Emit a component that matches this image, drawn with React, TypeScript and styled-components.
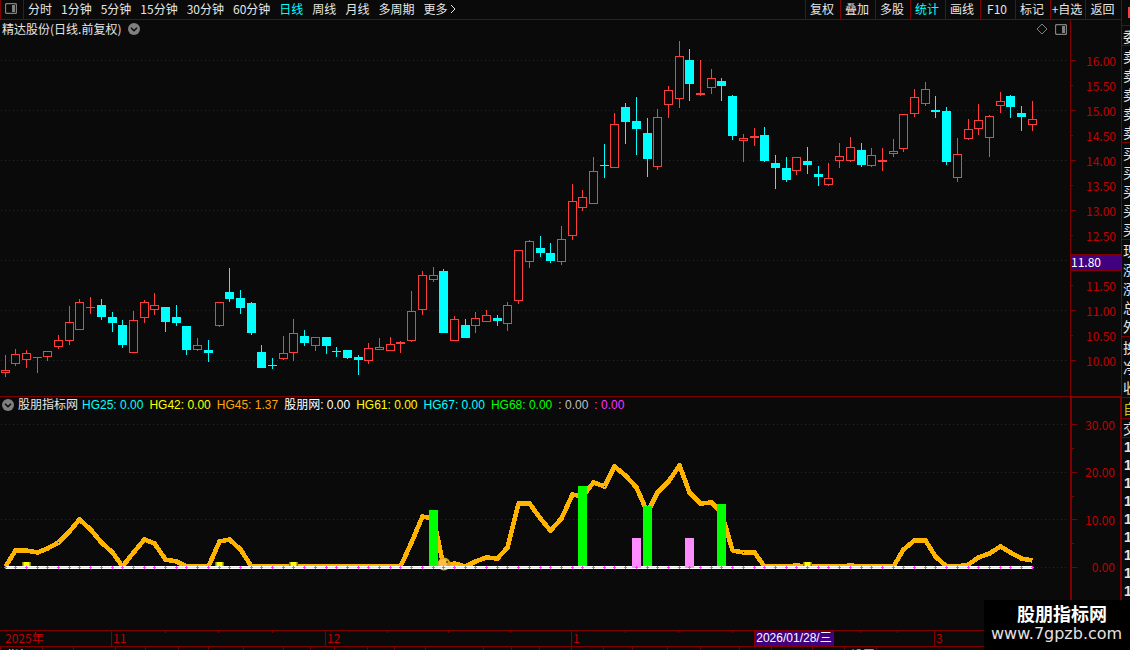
import React from "react";
import styled, { createGlobalStyle } from "styled-components";

const BG = "#0a0a0a";
const LINE = "#800000";
const LABEL = "#c00000";
const UP = "#ff3c3c";
const DOWN = "#00ffff";
const ICON = "#808080";

const GlobalStyle = createGlobalStyle`
  * { box-sizing: border-box; }
  html, body { margin: 0; background: ${BG}; }
  body {
    font-family: "Noto Sans CJK SC", "Liberation Sans", sans-serif;
    font-size: 12px;
    line-height: 16px;
    color: #e6e6e6;
    overflow-x: hidden;
  }
  button {
    font: inherit;
    color: inherit;
    background: none;
    border: 0;
    padding: 0;
    margin: 0;
    cursor: pointer;
    white-space: nowrap;
  }
  svg { display: block; flex: none; }
`;

const Page = styled.div`
  position: relative;
  min-height: 100vh;
  overflow: hidden;
`;

const Workspace = styled.div`
  display: grid;
  grid-template-columns: minmax(0, 1fr) 9px;
`;

const Toolbar = styled.nav`
  display: flex;
  height: 20px;
  border-bottom: 1px solid ${LINE};
`;

const LayoutButton = styled.button`
  width: 24px;
  padding: 0 0 2px 4px;
  border: solid ${LINE};
  border-width: 0 1px;
`;

const Periods = styled.div`
  display: flex;
  flex: 1;
  gap: 9px;
  padding-left: 4px;
`;

const PeriodButton = styled.button<{ $active?: boolean }>`
  display: flex;
  align-items: center;
  gap: 2px;
  padding-bottom: 2px;
  color: ${(p) => (p.$active ? DOWN : "inherit")};
`;

const Tools = styled.div`
  display: grid;
  grid-template-columns: repeat(8, 35px) 36px;
`;

const ToolButton = styled.button<{ $active?: boolean }>`
  padding: 0 2px 2px 0;
  border-left: 1px solid ${LINE};
  color: ${(p) => (p.$active ? DOWN : "inherit")};
`;

const Panel = styled.section`
  display: grid;
  grid-template-columns: minmax(0, 1fr) 51px;
`;

const SubPanel = styled(Panel)`
  border-top: 1px solid ${LINE};
`;

const Plot = styled.div`
  min-width: 0;
`;

const PlotHeader = styled.header`
  display: flex;
  align-items: center;
  height: 20px;
  padding: 0 3px 2px 2px;
`;

const Title = styled.h1`
  margin: 0 7px 0 0;
  font-size: 12px;
  font-weight: 400;
`;

const HeaderTools = styled.div`
  display: flex;
  align-items: center;
  gap: 7px;
  margin-left: auto;
`;

const Readout = styled.header`
  display: flex;
  align-items: center;
  height: 20px;
  gap: 6px;
  padding: 0 0 4px 2px;
  font-family: "Liberation Sans", "Noto Sans CJK SC", sans-serif;
  white-space: nowrap;
`;

const ReadoutTitle = styled.h2`
  margin: 0 -2px 0 -2px;
  font-size: 12px;
  font-weight: 400;
`;

const Value = styled.span<{ $color: string }>`
  color: ${(p) => p.$color};
`;

const Chart = styled.svg<{ $height: number }>`
  width: 100%;
  height: ${(p) => p.$height}px;
  shape-rendering: crispEdges;
`;

const Axis = styled.div`
  position: relative;
  border-left: 1px solid ${LINE};
  color: ${LABEL};
`;

const PriceAxis = styled(Axis)`
  padding-top: 28px;
`;

const ValueAxis = styled(Axis)`
  padding-top: 15px;
  border: solid ${LINE};
  border-width: 1px 1px 0 2px;
`;

const AxisScale = styled.div<{ $height: number }>`
  display: flex;
  flex-direction: column;
  height: ${(p) => p.$height}px;
`;

const AxisRow = styled.div<{ $minor?: boolean }>`
  display: flex;
  flex: 1;
  align-items: center;
  justify-content: space-between;
  padding-right: 5px;

  &::before {
    content: "";
    width: ${(p) => (p.$minor ? 2 : 5)}px;
    height: 1px;
    background: ${LINE};
  }
`;

const PriceTag = styled.output`
  position: absolute;
  top: 234px;
  left: 0;
  right: 0;
  height: 17px;
  border: solid ${LINE};
  border-width: 1px 0;
  background: #400080;
  color: #fff;
  line-height: 13px;
`;

const Side = styled.aside`
  border-left: 1px solid ${LINE};
  overflow: hidden;
`;

const SideBlock = styled.div<{ $height: number; $color?: string }>`
  display: flex;
  flex-direction: column;
  height: ${(p) => p.$height}px;
  padding-left: 1px;
  border-bottom: 1px solid ${LINE};
  color: ${(p) => p.$color || "inherit"};
`;

const SideRow = styled.div`
  display: flex;
  flex: 1;
  align-items: center;
  font-size: 14px;
  white-space: nowrap;
`;

const TickRow = styled.div`
  height: 18px;
  padding-left: 2px;
  font-family: "Liberation Sans", sans-serif;
  font-size: 14px;
  font-weight: 700;
  line-height: 18px;
`;

const Badge = styled.div`
  width: 2px;
  height: 11px;
  margin: 7px 0 0 auto;
  background: ${UP};
`;

const TimeAxis = styled.div`
  position: relative;
  display: grid;
  grid-template-columns: 111fr 214fr 246fr 363fr 196fr;
  height: 16px;
  border-top: 1px solid ${LINE};
  color: ${LABEL};
`;

const Month = styled.span<{ $first?: boolean }>`
  padding-left: ${(p) => (p.$first ? 5 : 1)}px;
  border-left: ${(p) => (p.$first ? 0 : 1)}px solid ${LINE};
  line-height: 14px;
`;

const TimeTicks = styled.svg`
  position: absolute;
  inset: 0;
  width: 100%;
  height: 2px;
  shape-rendering: crispEdges;
`;

const DateTag = styled.output`
  position: absolute;
  top: 0;
  left: 66.75%;
  height: 15px;
  padding: 0 1px;
  border: solid ${LINE};
  border-width: 0 1px;
  background: #400080;
  color: #fff;
  font-family: "Liberation Sans", "Noto Sans CJK SC", sans-serif;
  line-height: 15px;
  white-space: nowrap;
`;

const TabStrip = styled.div`
  display: flex;
  height: 4px;
  border-top: 1px solid ${LINE};
  overflow: hidden;
`;

const Tab = styled.span<{ $width: number; $active?: boolean }>`
  flex: ${(p) => p.$width} 0 0;
  min-width: 0;
  border-left: 1px solid ${LINE};
  text-indent: 6px;
  white-space: nowrap;
  color: ${(p) => (p.$active ? DOWN : "inherit")};
`;

const Watermark = styled.footer`
  position: absolute;
  right: 0;
  bottom: 0;
  width: 146px;
  height: 50px;
  padding: 1px 0 0 7px;
  background: #000;
  color: #fff;
  white-space: nowrap;
`;

const WatermarkName = styled.div`
  padding-left: 26px;
  font-size: 18px;
  font-weight: 700;
  line-height: 25px;
`;

const WatermarkLink = styled.a`
  display: block;
  color: #e8e0e0;
  font-family: "DejaVu Sans", sans-serif;
  font-size: 16px;
  line-height: 16px;
  text-decoration: none;
`;

/* high, body top, body bottom, low, rising */
type Candle = [number, number, number, number, 0 | 1];

const candles: Candle[] = [
  [355, 370, 373, 377, 1], [349, 354, 364, 366, 1], [350, 353, 360, 368, 1], [357, 357, 358, 373, 1],
  [351, 351, 357, 361, 1], [335, 340, 347, 349, 1], [306, 322, 341, 345, 1], [299, 302, 330, 330, 1],
  [297, 307, 308, 314, 1], [299, 305, 317, 320, 0], [312, 317, 323, 332, 0], [320, 325, 345, 348, 0],
  [311, 320, 353, 353, 1], [300, 302, 318, 323, 1], [293, 305, 310, 315, 1], [307, 307, 322, 332, 0],
  [305, 317, 323, 326, 0], [326, 326, 350, 355, 0], [338, 345, 350, 351, 1], [340, 350, 353, 362, 0],
  [302, 302, 326, 327, 1], [268, 292, 299, 302, 0], [290, 298, 308, 314, 0], [302, 303, 333, 335, 0],
  [345, 352, 368, 368, 0], [358, 365, 366, 369, 0], [336, 353, 359, 360, 1], [319, 333, 353, 361, 1],
  [330, 336, 343, 346, 0], [337, 337, 346, 351, 1], [337, 337, 346, 354, 0], [347, 351, 352, 357, 0],
  [350, 350, 358, 359, 0], [355, 357, 360, 375, 0], [343, 348, 361, 364, 1], [338, 347, 350, 350, 1],
  [337, 344, 351, 351, 1], [341, 342, 344, 353, 1], [291, 311, 341, 342, 1], [271, 275, 310, 315, 1],
  [267, 275, 280, 282, 1], [269, 271, 333, 333, 0], [316, 319, 341, 341, 1], [319, 325, 338, 338, 0],
  [312, 318, 326, 333, 1], [310, 315, 322, 322, 1], [315, 318, 321, 326, 0], [302, 305, 324, 331, 1],
  [250, 250, 301, 304, 1], [240, 241, 262, 268, 1], [236, 248, 253, 257, 0], [243, 253, 261, 263, 0],
  [226, 239, 262, 265, 1], [184, 201, 236, 240, 1], [190, 197, 208, 211, 1], [157, 171, 204, 204, 1],
  [144, 165, 166, 178, 0], [113, 124, 168, 168, 1], [103, 107, 122, 144, 0], [97, 121, 129, 155, 0],
  [118, 133, 159, 177, 0], [109, 117, 167, 170, 1], [86, 90, 105, 118, 1], [41, 56, 99, 108, 1],
  [49, 60, 84, 101, 0], [60, 93, 95, 96, 1], [69, 78, 88, 94, 1], [78, 81, 86, 101, 0],
  [95, 96, 136, 140, 0], [134, 138, 141, 162, 1], [128, 136, 138, 146, 1], [127, 135, 161, 162, 0],
  [155, 163, 168, 189, 0], [157, 168, 180, 182, 0], [157, 157, 171, 175, 1], [147, 161, 165, 174, 0],
  [166, 174, 177, 186, 0], [163, 178, 185, 186, 1], [143, 156, 161, 168, 1], [137, 147, 161, 162, 1],
  [143, 150, 165, 167, 0], [148, 155, 166, 167, 1], [148, 160, 162, 171, 1], [139, 151, 154, 157, 1],
  [114, 114, 149, 152, 1], [89, 97, 114, 117, 1], [82, 89, 104, 106, 1], [96, 110, 112, 118, 0],
  [107, 111, 162, 165, 0], [138, 154, 178, 182, 1], [119, 129, 139, 140, 1], [104, 120, 129, 135, 1],
  [115, 116, 138, 157, 1], [92, 101, 106, 113, 1], [95, 96, 107, 118, 0], [106, 113, 117, 131, 0],
  [101, 119, 125, 131, 1],
];

const curve = [
  566, 550, 550, 552, 548, 542, 531, 519, 529, 542, 552, 566, 552, 539, 543, 559, 561, 566, 566, 566,
  541, 539, 549, 566, 566, 566, 566, 566, 566, 566, 566, 566, 566, 566, 566, 566, 566, 566, 542, 516,
  518, 565, 563, 566, 561, 557, 558, 547, 503, 503, 518, 530, 518, 494, 496, 482, 486, 466, 475, 487,
  512, 492, 481, 465, 492, 503, 502, 512, 550, 552, 552, 566, 566, 566, 565, 566, 566, 566, 566, 565,
  566, 566, 566, 566, 549, 540, 540, 556, 566, 566, 564, 557, 553, 546, 552, 558, 560,
];

const centre = (i: number) => Math.floor(5 + (i * 107) / 10);

const greenBars = [
  { x: 429, top: 510 },
  { x: 578, top: 486 },
  { x: 643, top: 506 },
  { x: 717, top: 504 },
];
const pinkBars = [632, 685];
const yellowMarks = [2, 20, 27, 75];

const periods = ["分时", "1分钟", "5分钟", "15分钟", "30分钟", "60分钟", "日线", "周线", "月线", "多周期"];
const tools = ["复权", "叠加", "多股", "统计", "画线", "F10", "标记", "+自选", "返回"];
const prices = ["16.00", "15.50", "15.00", "14.50", "14.00", "13.50", "13.00", "12.50", "", "11.50", "11.00", "10.50", "10.00"];
const values = ["30.00", "", "20.00", "", "10.00", "", "0.00"];
const readouts: [string, string][] = [
  ["HG25: 0.00", "#00ffff"],
  ["HG42: 0.00", "#ffff00"],
  ["HG45: 1.37", "#ffa500"],
  ["股朋网: 0.00", "#ffffff"],
  ["HG61: 0.00", "#ffff00"],
  ["HG67: 0.00", "#00ffff"],
  ["HG68: 0.00", "#00ff00"],
  [": 0.00", "#c0c0c0"],
  [": 0.00", "#ff32ff"],
];
const timeTicks = [165, 218, 272, 387, 448, 510, 625, 678, 732, 860, 897];
const tabEdges = [
  0, 42, 73, 115, 144, 177, 207, 242, 282, 308, 332, 365, 391, 422, 480, 508, 536, 568, 599, 628, 663, 696, 735,
  766, 807, 839, 871, 1130,
];

const PanelIcon = () => (
  <svg width="12" height="11" viewBox="0 0 12 11">
    <rect x="0.5" y="0.5" width="11" height="10" rx="1.5" fill="none" stroke={ICON} strokeWidth="1.3" />
    <rect x="7" y="2" width="3" height="7" fill={ICON} />
  </svg>
);

const CollapseIcon = () => (
  <svg width="12" height="12" viewBox="0 0 12 12">
    <circle cx="6" cy="6" r="6" fill={ICON} />
    <path d="M3 4.8 L6 7.8 L9 4.8" fill="none" stroke={BG} strokeWidth="1.5" />
  </svg>
);

const GridLines = ({ rows }: { rows: number[] }) => (
  <>
    {rows.map((y) => (
      <line key={y} x1="1" x2="1067" y1={y + 0.5} y2={y + 0.5} stroke={LINE} strokeDasharray="1 3" />
    ))}
  </>
);

const CandleShape = ({ x, candle }: { x: number; candle: Candle }) => {
  const [high, top, bottom, low, rising] = candle;
  const color = rising ? UP : DOWN;
  return (
    <g>
      <rect x={x} y={high} width="1" height={low - high} fill={color} />
      {rising && bottom - top > 1 ? (
        <rect x={x - 3.5} y={top + 0.5} width="8" height={bottom - top - 1} fill={BG} stroke={color} />
      ) : (
        <rect x={x - 4} y={top} width="9" height={bottom - top} fill={color} />
      )}
    </g>
  );
};

const PriceChart = () => (
  <Chart $height={356} viewBox="0 40 1070 356" preserveAspectRatio="none">
    <GridLines rows={[60, 110, 160, 210, 260, 310, 360]} />
    {candles.map((c, i) => (
      <CandleShape key={i} x={centre(i)} candle={c} />
    ))}
  </Chart>
);

const IndicatorChart = () => (
  <Chart $height={213} viewBox="0 417 1070 213" preserveAspectRatio="none">
    <GridLines rows={[424, 472, 519, 567]} />
    <polyline
      points={curve.map((y, i) => `${centre(i) + 0.5},${y + 0.5}`).join(" ")}
      fill="none"
      stroke="#ffb400"
      strokeWidth="4.6"
      strokeLinejoin="round"
    />
    {yellowMarks.map((i) => (
      <g key={i}>
        <rect x={centre(i) - 4} y="562" width="9" height="6" fill="#808000" />
        <rect x={centre(i) - 3} y="562" width="7" height="6" fill="#c0c000" />
        <rect x={centre(i) - 2} y="562" width="5" height="6" fill="#ffff00" />
      </g>
    ))}
    {greenBars.map((b) => (
      <rect key={b.x} x={b.x} y={b.top} width="9" height={567 - b.top} fill="#00ff00" />
    ))}
    <g shapeRendering="auto">
      <circle cx="444" cy="564" r="6.5" fill="#d9a520" />
      <circle cx="443" cy="563" r="4" fill="#ffc040" />
      <circle cx="447" cy="562" r="1" fill="#5a4000" />
    </g>
    <rect x="5" y="566" width="1028" height="3" fill="#ffffff" />
    <rect x="5" y="567" width="1028" height="1" fill="#ffff00" />
    {pinkBars.map((x) => (
      <rect key={x} x={x} y="538" width="9" height="30" fill="#ff8cff" />
    ))}
    {candles.map((_, i) => (
      <g key={i} fill="#ff32ff">
        <rect x={centre(i)} y="566" width="1" height="3" />
        <rect x={centre(i) - 1} y="567" width="3" height="1" />
      </g>
    ))}
  </Chart>
);

const SideList = ({ items, height, color }: { items: string[]; height: number; color?: string }) => (
  <SideBlock $height={height} $color={color}>
    {items.map((t, i) => (
      <SideRow key={i}>{t}</SideRow>
    ))}
  </SideBlock>
);

export default function App() {
  return (
    <Page>
      <GlobalStyle />
      <Workspace>
        <main>
          <Toolbar>
            <LayoutButton aria-label="布局">
              <PanelIcon />
            </LayoutButton>
            <Periods>
              {periods.map((p) => (
                <PeriodButton key={p} $active={p === "日线"}>
                  {p}
                </PeriodButton>
              ))}
              <PeriodButton>
                更多
                <svg width="8" height="10" viewBox="0 0 8 10">
                  <path d="M2 1 L6 5 L2 9" fill="none" stroke="#e6e6e6" />
                </svg>
              </PeriodButton>
            </Periods>
            <Tools>
              {tools.map((t) => (
                <ToolButton key={t} $active={t === "统计"}>
                  {t}
                </ToolButton>
              ))}
            </Tools>
          </Toolbar>

          <Panel>
            <Plot>
              <PlotHeader>
                <Title>精达股份(日线.前复权)</Title>
                <button aria-label="展开">
                  <CollapseIcon />
                </button>
                <HeaderTools>
                  <button aria-label="标记点">
                    <svg width="12" height="12" viewBox="0 0 12 12">
                      <path d="M6 1 L11 6 L6 11 L1 6 Z" fill="none" stroke={ICON} />
                    </svg>
                  </button>
                  <button aria-label="侧栏">
                    <PanelIcon />
                  </button>
                </HeaderTools>
              </PlotHeader>
              <PriceChart />
            </Plot>
            <PriceAxis>
              <AxisScale $height={325}>
                {prices.map((p, i) => (
                  <AxisRow key={i} $minor={i % 2 === 1}>
                    {p}
                  </AxisRow>
                ))}
              </AxisScale>
              <PriceTag>11.80</PriceTag>
            </PriceAxis>
          </Panel>

          <SubPanel>
            <Plot>
              <Readout>
                <button aria-label="收起">
                  <CollapseIcon />
                </button>
                <ReadoutTitle>股朋指标网</ReadoutTitle>
                {readouts.map(([text, color], i) => (
                  <Value key={i} $color={color}>
                    {text}
                  </Value>
                ))}
              </Readout>
              <IndicatorChart />
            </Plot>
            <ValueAxis>
              <AxisScale $height={166}>
                {values.map((v, i) => (
                  <AxisRow key={i} $minor={i % 2 === 1}>
                    {v}
                  </AxisRow>
                ))}
              </AxisScale>
            </ValueAxis>
          </SubPanel>
        </main>

        <Side>
          <SideBlock $height={26}>
            <Badge />
          </SideBlock>
          <SideList height={20} items={["委"]} />
          <SideList height={97} items={["卖", "卖", "卖", "卖", "卖"]} />
          <SideList height={97} items={["买", "买", "买", "买", "买"]} />
          <SideList height={97} items={["现", "涨", "涨", "总", "外"]} />
          <SideList height={61} items={["换", "净", "收"]} />
          <SideList height={21} items={["自"]} color="#c8c800" />
          <SideList height={19} items={["交"]} />
          {Array.from({ length: 9 }, (_, i) => (
            <TickRow key={i}>1</TickRow>
          ))}
        </Side>
      </Workspace>

      <TimeAxis>
        <TimeTicks viewBox="0 0 1130 2" preserveAspectRatio="none">
          {timeTicks.map((x) => (
            <rect key={x} x={x} y="0" width="1" height="2" fill={LINE} />
          ))}
        </TimeTicks>
        <Month $first>2025年</Month>
        <Month>11</Month>
        <Month>12</Month>
        <Month>1</Month>
        <Month>3</Month>
        <DateTag>2026/01/28/三</DateTag>
      </TimeAxis>
      <TabStrip>
        {tabEdges.slice(1).map((edge, i) => (
          <Tab key={edge} $width={edge - tabEdges[i]} $active={tabEdges[i] === 839}>
            {i === 0 ? "指标" : tabEdges[i] === 839 ? "设置" : ""}
          </Tab>
        ))}
      </TabStrip>

      <Watermark>
        <WatermarkName>股朋指标网</WatermarkName>
        <WatermarkLink href="#">www.7gpzb.com</WatermarkLink>
      </Watermark>
    </Page>
  );
}
